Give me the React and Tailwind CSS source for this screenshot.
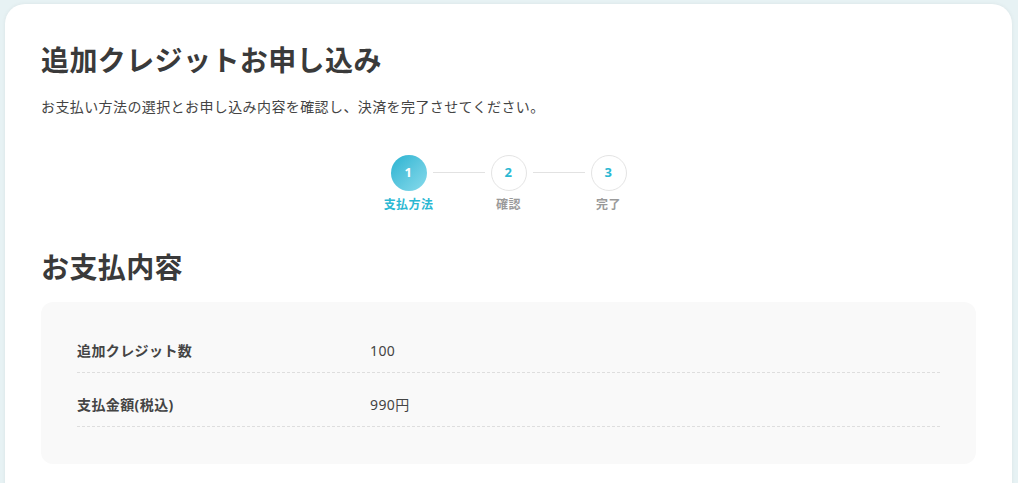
const steps = [
  { no: 1, label: "支払方法", active: true },
  { no: 2, label: "確認" },
  { no: 3, label: "完了" },
];

const rows = [
  { label: "追加クレジット数", value: "100" },
  { label: "支払金額(税込)", value: "990円" },
];

function Stepper() {
  return (
    <div className="flex items-start justify-center">
      {steps.map((s, i) => (
        <div key={s.no} className="flex items-start">
          {i > 0 && <div className="mx-[6px] mt-[17px] h-px w-[52px] bg-[#e2e2e2]" />}
          <div className="flex w-[36px] flex-col items-center">
            <div
              className={
                s.active
                  ? "flex h-[36px] w-[36px] items-center justify-center rounded-full bg-gradient-to-br from-[#1fb3d1] to-[#86dbec] text-[13px] font-bold text-white"
                  : "flex h-[36px] w-[36px] items-center justify-center rounded-full border border-[#e4e4e4] bg-white text-[13px] font-bold text-[#2bb8d3]"
              }
            >
              {s.no}
            </div>
            <div
              className={
                "mt-[5px] whitespace-nowrap text-[12px] font-bold leading-[18px] " +
                (s.active ? "text-[#2bb8d3]" : "text-[#9a9a9a]")
              }
            >
              {s.label}
            </div>
          </div>
        </div>
      ))}
    </div>
  );
}

export default function App() {
  return (
    <div
      className="min-h-screen bg-[#e7f2f4] pl-[5px] pr-[6px] pt-[4px] tracking-wide text-[#3c3c3c]"
      style={{ fontFamily: '"Noto Sans", "Noto Sans CJK JP", sans-serif' }}
    >
      <div className="min-h-[520px] rounded-[20px] bg-white px-[36px] pt-[35px] shadow-[0_0_4px_rgba(0,0,0,0.06)]">
        <h1 className="text-[28px] font-bold leading-[42px] text-[#3a3a3a]">追加クレジットお申し込み</h1>
        <p className="mt-[16px] text-[14px] leading-[20px] text-[#444]">
          お支払い方法の選択とお申し込み内容を確認し、決済を完了させてください。
        </p>

        <div className="mt-[38px]">
          <Stepper />
        </div>

        <h2 className="mt-[34px] text-[28px] font-bold leading-[38px] text-[#3a3a3a]">お支払内容</h2>

        <div className="mt-[16px] rounded-[12px] bg-[#f9f9f9] px-[36px] pb-[37px] pt-[17px]">
          {rows.map(r => (
            <div key={r.label} className="flex border-b border-dashed border-[#dedede] pb-[11px] pt-[22px] text-[14px] leading-[20px]">
              <div className="w-[293px] font-bold text-[#444]">{r.label}</div>
              <div className="text-[#444]">{r.value}</div>
            </div>
          ))}
        </div>
      </div>
    </div>
  );
}
